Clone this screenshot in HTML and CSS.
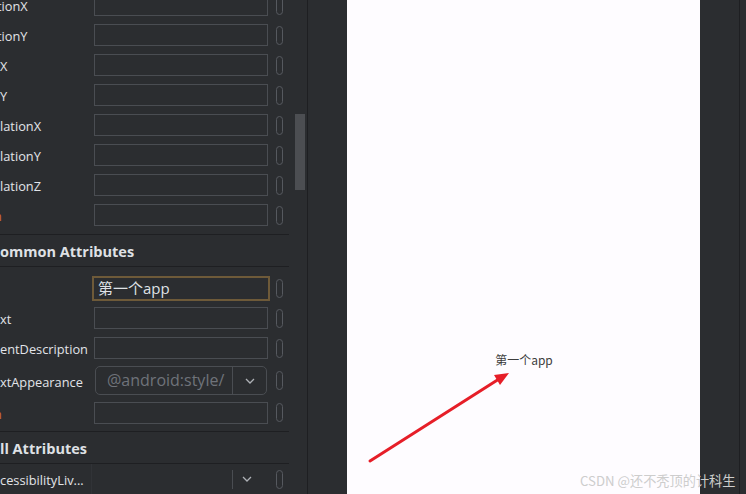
FILE: index.html
```html
<!DOCTYPE html>
<html lang="zh-CN">
<head>
<meta charset="UTF-8">
<meta name="viewport" content="width=device-width, initial-scale=1.0">
<title>Attributes - Layout Editor</title>
<link rel="stylesheet" href="styles.css">
</head>
<body>

<div class="ide">
    <!-- Attributes panel -->
    <aside class="attrs">
        <div class="section first">
            <div class="row"><span class="label"><span class="cut">tionX</span></span><span class="field"></span><span class="toggle"></span></div>
            <div class="row"><span class="label"><span class="cut">tionY</span></span><span class="field"></span><span class="toggle"></span></div>
            <div class="row"><span class="label">X</span><span class="field"></span><span class="toggle"></span></div>
            <div class="row"><span class="label">Y</span><span class="field"></span><span class="toggle"></span></div>
            <div class="row"><span class="label">lationX</span><span class="field"></span><span class="toggle"></span></div>
            <div class="row"><span class="label">lationY</span><span class="field"></span><span class="toggle"></span></div>
            <div class="row"><span class="label">lationZ</span><span class="field"></span><span class="toggle"></span></div>
            <div class="row"><span class="label warn"><span class="cut-more">n</span></span><span class="field"></span><span class="toggle"></span></div>
        </div>

        <div class="section-title">ommon Attributes</div>

        <div class="section common">
            <div class="row"><span class="label"></span><span class="field focused">第一个app</span><span class="toggle"></span></div>
            <div class="row"><span class="label">xt</span><span class="field"></span><span class="toggle"></span></div>
            <div class="row"><span class="label">entDescription</span><span class="field"></span><span class="toggle"></span></div>
            <div class="row row-combo">
                <span class="label">xtAppearance</span>
                <span class="combo">
                    <span class="combo-value">@android:style/</span>
                    <span class="combo-arrow">
                        <svg width="10" height="6" viewBox="0 0 10 6"><polyline points="1,1 5,5 9,1" fill="none" stroke="#aeb1b6" stroke-width="1.3"/></svg>
                    </span>
                </span>
                <span class="toggle"></span>
            </div>
            <div class="row row-last"><span class="label warn"><span class="cut-more">n</span></span><span class="field"></span><span class="toggle"></span></div>
        </div>

        <div class="section-title">ll Attributes</div>

        <div class="section">
            <div class="row row-all">
                <span class="label">cessibilityLiv...</span>
                <span class="plain-combo">
                    <span class="plain-divider"></span>
                    <svg width="10" height="6" viewBox="0 0 10 6"><polyline points="1,1 5,5 9,1" fill="none" stroke="#aeb1b6" stroke-width="1.3"/></svg>
                </span>
                <span class="toggle"></span>
            </div>
        </div>
    </aside>

    <div class="gutter"><div class="thumb"></div></div>
    <div class="design-gap"></div>

    <!-- Design preview -->
    <div class="preview">
        <p class="preview-text">第一个app</p>
    </div>

    <div class="side-strip"></div>
    <div class="side-edge"></div>

    <!-- annotation -->
    <svg class="arrow" width="746" height="494" viewBox="0 0 746 494">
        <line x1="370" y1="461" x2="499" y2="379" stroke="#e61e28" stroke-width="3" stroke-linecap="round"/>
        <polygon points="509,373 494,375 500,385" fill="#e61e28"/>
    </svg>
    <span class="watermark">CSDN @还不秃顶的计科生</span>
</div>

</body>
</html>
```

FILE: styles.css
```css
body {
    margin: 0;
    padding: 0;
    background-color: #2b2d30;
    font-family: "Open Sans", "Noto Sans CJK SC", sans-serif;
    overflow: hidden;
}

.ide {
    position: relative;
    display: flex;
    height: 494px;
    overflow: hidden;
}

/* Attributes panel */
.attrs {
    width: 289px;
    flex-shrink: 0;
    overflow: hidden;
}

.section.first {
    margin-top: -10px;
    padding-bottom: 4px;
}

.section.common {
    padding-top: 6px;
    padding-bottom: 4px;
}

.section-title {
    border-top: 1px solid #1e1f22;
    border-bottom: 1px solid #1e1f22;
    height: 31px;
    line-height: 33px;
    font-size: 14.5px;
    font-weight: 700;
    color: #dfe1e5;
    white-space: nowrap;
}

.row {
    display: grid;
    grid-template-columns: 94px 174px 21px;
    align-items: center;
    height: 30px;
}

.row-combo {
    height: 35px;
}

.row-last {
    height: 29px;
}

.label {
    padding-top: 2px;
    font-size: 12.8px;
    color: #e2e4e8;
    white-space: nowrap;
    overflow: hidden;
}

.label .cut {
    margin-left: -3px;
}

.label.warn {
    color: #cf6a35;
}

.label .cut-more {
    display: inline-block;
    margin-left: -6px;
}

.field {
    box-sizing: border-box;
    height: 22px;
    border: 1px solid #4a4d52;
}

.field.focused {
    margin-left: -2px;
    width: 178px;
    height: 25px;
    border: 2px solid #6e5a39;
    padding-left: 4px;
    font-size: 15px;
    line-height: 21px;
    color: #dfe1e5;
    font-family: "Open Sans", "Noto Sans CJK SC", sans-serif;
}

.toggle {
    box-sizing: border-box;
    margin-left: 8px;
    width: 7px;
    height: 19px;
    border: 1px solid #56595f;
    border-radius: 4px;
}

/* textAppearance combo */
.combo {
    box-sizing: border-box;
    display: flex;
    margin-left: 1px;
    width: 172px;
    height: 29px;
    border: 1px solid #4a4d52;
    border-radius: 5px;
}

.combo-value {
    box-sizing: border-box;
    width: 137px;
    padding-left: 11px;
    border-right: 1px solid #4a4d52;
    font-size: 16px;
    line-height: 27px;
    color: #6f737a;
    white-space: nowrap;
    overflow: hidden;
}

.combo-arrow {
    flex: 1;
    display: flex;
    align-items: center;
    justify-content: center;
}

/* All attributes row */
.row-all .label {
    box-sizing: border-box;
    padding-top: 0;
    width: 92px;
    height: 30px;
    line-height: 32px;
    border-right: 1px solid #313337;
}

.plain-combo {
    display: flex;
    align-items: center;
    justify-content: flex-end;
    gap: 9px;
    padding-right: 16px;
    height: 30px;
}

.plain-divider {
    width: 1px;
    height: 19px;
    background-color: #4a4d52;
}

/* scroll gutter */
.gutter {
    width: 18px;
    flex-shrink: 0;
    border-right: 1px solid #1e1f22;
}

.thumb {
    margin-top: 114px;
    margin-left: 6px;
    width: 10px;
    height: 76px;
    background-color: #4c4e52;
}

.design-gap {
    width: 39px;
    flex-shrink: 0;
}

/* Design preview */
.preview {
    width: 353px;
    flex-shrink: 0;
    background-color: #fefcff;
}

.preview-text {
    margin: 351px 0 0 1px;
    text-align: center;
    font-family: "Noto Sans CJK SC", sans-serif;
    font-size: 12px;
    color: #3d3d3d;
}

.side-strip {
    width: 39px;
    flex-shrink: 0;
    border-right: 1px solid #1e1f22;
}

.side-edge {
    flex: 1;
}

/* annotation overlay */
.arrow {
    position: absolute;
    left: 0;
    top: 0;
}

.watermark {
    position: absolute;
    left: 580px;
    top: 471px;
    font-family: "Noto Sans CJK SC", sans-serif;
    font-size: 13.2px;
    color: #cdcdcd;
    white-space: nowrap;
}
```
